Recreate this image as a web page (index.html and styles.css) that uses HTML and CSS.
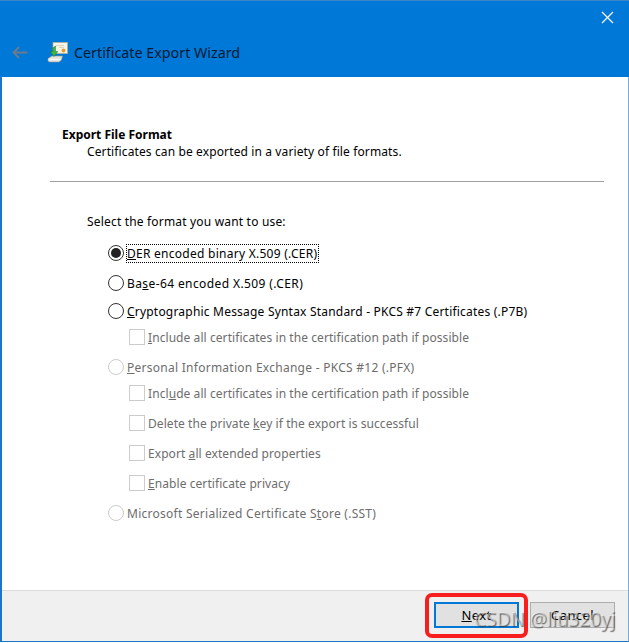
FILE: index.html
```html
<!DOCTYPE html>
<html lang="en">
<head>
<meta charset="utf-8">
<title>Certificate Export Wizard</title>
<link rel="stylesheet" href="styles.css">
</head>
<body>
<div class="window">
  <header class="titlebar">
    <div class="closerow">
      <svg class="close" width="13" height="13" viewBox="0 0 13 13"><path d="M1 1L12 12M12 1L1 12" stroke="#fff" stroke-width="1.2" fill="none"/></svg>
    </div>
    <div class="titlerow">
      <svg class="back" width="16" height="13" viewBox="0 0 16 13"><path d="M15.500 6.500H2M7 1L1.500 6.500L7 12" stroke="#6f7a88" stroke-width="1.800" fill="none"/></svg>
      <svg class="certicon" width="21" height="21" viewBox="0 0 21 21">
        <rect x="6" y="0.500" width="14.500" height="11" fill="#f8f5e8" stroke="#b9b08a" stroke-width="0.700"/>
        <path d="M9 3.500h8M12 5.500h5" stroke="#cfc9b0" stroke-width="0.800"/>
        <circle cx="16.500" cy="8.500" r="2" fill="#e0a030"/>
        <path d="M1 16.500L5 14H15.500L14.500 18L12 20H2.500L1 19Z" fill="#e4e6e4" stroke="#8d9392" stroke-width="0.600"/>
        <path d="M1.500 17.500H13.500" stroke="#fbfbfb" stroke-width="0.900"/>
        <path d="M8.500 4V9.500L10.800 9.500L7 14.500L3.500 9.500H5.800V6Z" fill="#3fb53f" stroke="#1d7d2a" stroke-width="0.500"/>
      </svg>
      <h1 class="title">Certificate Export Wizard</h1>
    </div>
  </header>
  <main class="content">
    <section class="intro">
      <h2 class="heading">Export File Format</h2>
      <p class="subheading">Certificates can be exported in a variety of file formats.</p>
    </section>
    <hr class="divider">
    <section class="options">
      <p class="prompt">Select the format you want to use:</p>
      <div class="row radio-row first">
        <span class="radio checked"></span>
        <span class="label focused"><u>D</u>ER encoded binary X.509 (.CER)</span>
      </div>
      <div class="row radio-row second">
        <span class="radio"></span>
        <span class="label">Ba<u>s</u>e-64 encoded X.509 (.CER)</span>
      </div>
      <div class="row radio-row third">
        <span class="radio"></span>
        <span class="label"><u>C</u>ryptographic Message Syntax Standard - PKCS #7 Certificates (.P7B)</span>
      </div>
      <div class="row check-row disabled">
        <span class="check"></span>
        <span class="label"><u>I</u>nclude all certificates in the certification path if possible</span>
      </div>
      <div class="row radio-row disabled spaced">
        <span class="radio"></span>
        <span class="label"><u>P</u>ersonal Information Exchange - PKCS #12 (.PFX)</span>
      </div>
      <div class="row check-row disabled">
        <span class="check"></span>
        <span class="label">Incl<u>u</u>de all certificates in the certification path if possible</span>
      </div>
      <div class="row check-row disabled">
        <span class="check"></span>
        <span class="label">Delete the private <u>k</u>ey if the export is successful</span>
      </div>
      <div class="row check-row disabled">
        <span class="check"></span>
        <span class="label">Export <u>a</u>ll extended properties</span>
      </div>
      <div class="row check-row disabled">
        <span class="check"></span>
        <span class="label"><u>E</u>nable certificate privacy</span>
      </div>
      <div class="row radio-row disabled spaced">
        <span class="radio"></span>
        <span class="label">Microsoft Serialized Certificate S<u>t</u>ore (.SST)</span>
      </div>
    </section>
  </main>
  <footer class="footer">
    <button class="btn primary"><u>N</u>ext</button>
    <button class="btn">Cancel</button>
  </footer>
  <div class="highlight"></div>
  <div class="watermark">CSDN @liu320yj</div>
</div>
</body>
</html>
```
FILE: styles.css
```css
* { box-sizing: border-box; }
html, body { margin: 0; height: 100%; background: #fff; }
body { font-family: "Noto Sans", "Open Sans", sans-serif; font-size: 12px; color: #000; overflow: hidden; }
.window { position: relative; width: 629px; height: 642px; display: flex; flex-direction: column; border-left: 2px solid #1b76c8; border-right: 1px solid #7aa9d6; border-bottom: 1px solid #1b76c8; }
.titlebar { height: 77px; background: #0078d7; margin: 0 -1px 0 -2px; border-top: 1px solid #3d86c6; display: flex; flex-direction: column; padding: 0 0 0 12px; flex: none; }
.closerow { height: 33px; display: flex; justify-content: flex-end; align-items: flex-start; padding: 10px 15px 0 0; }
.titlerow { display: flex; align-items: center; height: 37px; }
.back { margin-right: 19px; }
.certicon { margin-right: 6px; }
.title { margin: 0; font-size: 14.300px; font-weight: 400; color: #021a33; }
.content { flex: 1; display: flex; flex-direction: column; padding: 49px 0 0 0; }
.intro { padding-left: 60px; }
.heading { margin: 0; font-size: 12px; font-weight: 700; line-height: 17px; }
.subheading { margin: 0 0 0 25px; line-height: 17px; letter-spacing: 0.010em; }
.divider { margin: 21px 24px 0 48px; border: 0; border-top: 1px solid #a0a0a0; height: 0; }
.options { padding: 31px 0 0 85px; }
.prompt { margin: 0 0 14px; line-height: 17px; letter-spacing: 0.015em; }
.row { display: flex; align-items: center; height: 18px; }
.radio-row { margin-left: 21px; letter-spacing: 0.022em; }
.radio-row .radio { margin-right: 3px; }
.second { margin-top: 12px; letter-spacing: 0.033em; }
.third { margin-top: 10px; letter-spacing: 0.017em; }
.check-row { margin-left: 42px; margin-top: 8px; letter-spacing: 0.006em; }
.check-row + .check-row { margin-top: 12px; }
.spaced { margin-top: 12px; }
.radio { width: 16px; height: 16px; border-radius: 50%; border: 1px solid #333; background: #fff; display: flex; align-items: center; justify-content: center; flex: none; }
.radio.checked::after { content: ""; width: 10px; height: 10px; border-radius: 50%; background: #222; }
.check { width: 16px; height: 16px; border: 1px solid #ccc; margin-right: 3px; flex: none; }
.disabled { color: #6d6d6d; }
.disabled .radio { border-color: #ccc; }
.focused { outline: 1px dotted #000; outline-offset: 0; padding-right: 1px; }
.footer { height: 51px; background: #f0f0f0; border-top: 1px solid #dcdcdc; display: flex; justify-content: flex-end; align-items: flex-start; gap: 11px; padding: 11px 13px 0 0; flex: none; }
.btn { width: 85px; height: 26px; background: #e1e1e1; border: 1px solid #adadad; font: inherit; font-size: 13px; color: #000; padding: 0; letter-spacing: 0.030em; }
.btn.primary { border: 2px solid #0078d7; }
.highlight { position: absolute; left: 423px; top: 593px; width: 103px; height: 45px; border: 4px solid #f81e1e; border-radius: 7px; }
.watermark { position: absolute; left: 472px; top: 606px; font-size: 19px; color: rgba(255,255,255,0.45); text-shadow: 1px 1px 1px rgba(60,60,60,0.75); white-space: nowrap; }
```
